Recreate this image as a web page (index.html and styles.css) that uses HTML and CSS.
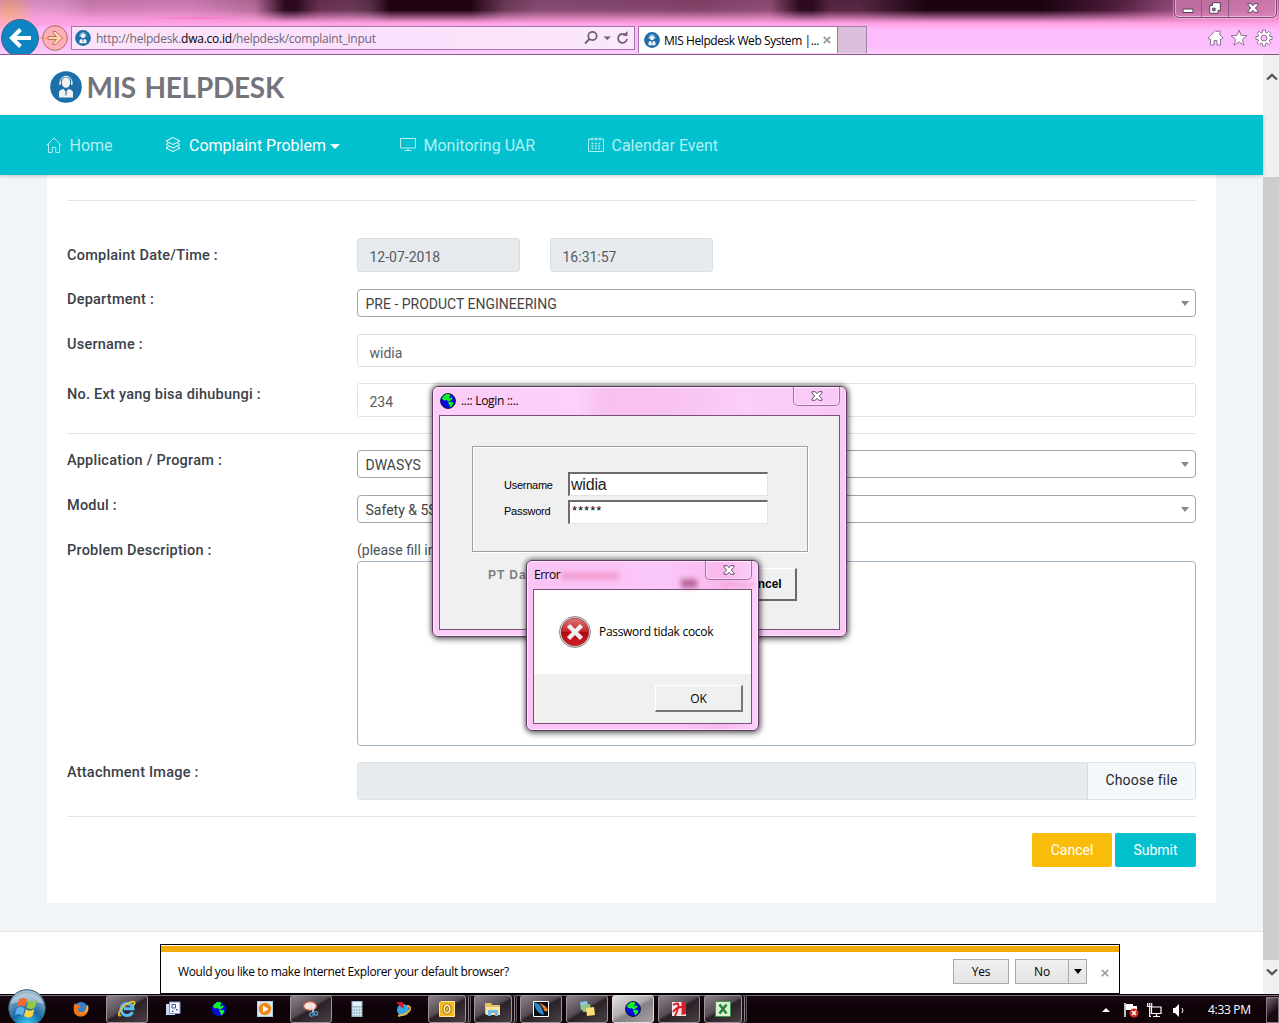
FILE: index.html
```html
<!DOCTYPE html>
<html lang="en">
<head>
<meta charset="utf-8">
<title>MIS Helpdesk Web System</title>
<link rel="stylesheet" href="styles.css">
</head>
<body>
<svg width="0" height="0" class="defs" aria-hidden="true">
  <symbol id="agent" viewBox="0 0 32 32">
    <circle cx="16" cy="16" r="15.8" fill="#1c6fa9"/>
    <path d="M10 12a6 6.800 0 0 1 12 0" fill="none" stroke="#fff" stroke-width="1"/>
    <ellipse cx="16" cy="11.500" rx="4.200" ry="5.200" fill="#f4f1f3"/>
    <path d="M9.500 10.500h1.500v3.500H9.500zM21 10.500h1.500v3.500H21z" fill="#dce8f2"/>
    <path d="M9 26.500v-5c0-2 2-3 4.500-3.500l2.500 3 2.500-3c2.500.5 4.500 1.500 4.500 3.500v5z" fill="#f4f1f3"/>
    <path d="m15.300 21 .7-.8.7.8-.3 3.500h-.8z" fill="#1c6fa9"/>
  </symbol>
  <symbol id="globe" viewBox="0 0 16 16">
    <circle cx="8" cy="8" r="7.400" fill="#0808e0" stroke="#03102c"/>
    <path d="M2.500 4 6 1h3.500l1 1.500L9 4.500l1 1L11.500 4l1.200 1.500L11 7.500 8.500 8.800 6.500 7 4.500 7.500 2 6zM9 9l3.500 0 1 1.500-2 3-1.500 1-.5-2.500-1.500-2z" fill="#12f02c"/>
  </symbol>
  <symbol id="closex" viewBox="0 0 12 10">
    <path d="M1 .7h3.200L6 2.700 7.800.7H11v1.400L8.300 5 11 7.900v1.400H7.800L6 7.300 4.200 9.300H1V7.900L3.700 5 1 2.100z" fill="#fff" stroke="#50405a" stroke-width=".9"/>
  </symbol>
</svg>

<header class="chrome">
  <div class="titlebar"></div>
  <div class="toolbar">
    <svg class="back" viewBox="0 0 38 38"><circle cx="19" cy="19" r="18.500" fill="#0e84c3" stroke="#41658c"/><path d="M30 19H12M19.500 10.500 11 19l8.500 8.500" fill="none" stroke="#fff" stroke-width="4"/></svg>
    <svg class="forward" viewBox="0 0 26 26"><circle cx="13" cy="13" r="12.300" fill="#ffa47080" stroke="#a7705e"/><path d="M6 11.500h8.500L11 8V6.500h3L20.500 13 14 19.500h-3V18l3.500-3.500H6z" fill="#ffd3a8" stroke="#b87468"/></svg>
    <div class="address">
      <svg class="favicon"><use href="#agent"/></svg>
      <span class="url">http://helpdesk.<b>dwa.co.id</b>/helpdesk/complaint_input</span>
      <svg class="addr-icons" viewBox="0 0 46 16"><g fill="none" stroke="#6f5d74" stroke-width="1.800"><circle cx="8.500" cy="6" r="4.200"/><path d="M5.500 9 1 13.500M42 5.500A4.500 4.500 0 1 0 43 9"/></g><path d="M19.500 6.500h7.500L23.200 10zM38.500 5.800h5V1z" fill="#6f5d74"/></svg>
    </div>
    <div class="tab">
      <svg class="favicon"><use href="#agent"/></svg>
      <span>MIS Helpdesk Web System |...</span>
      <svg class="tab-x" viewBox="0 0 8 8"><path d="m.8.8 6.400 6.400m0-6.400L.8 7.200" stroke="#999" stroke-width="1.800"/></svg>
    </div>
    <div class="newtab"></div>
    <svg class="tools" viewBox="0 0 66 18"><g fill="#fff" stroke="#8d7592"><path d="m1 9 7.500-7.500L10 3V2h3v4l3 3-1 1h-1.500v6H10v-4.500H7V16H3.500v-6H2z"/><path d="m32 1 2.100 5.400 5.900.3-4.600 3.700 1.600 5.700-5-3.200-5 3.200 1.600-5.700L24 6.700l5.900-.3z"/><path d="M55.500 1h3v2.300l1.600.7 1.700-1.700L64 4.500 62.200 6l.7 1.500H65v3h-2.100l-.7 1.500 1.700 1.700-2 2-1.800-1.600-1.600.6V17h-3v-2.300l-1.600-.6-1.700 1.600-2.200-2.200 1.700-1.500-.7-1.500H49v-3h2.100l.6-1.500L50 4.300 52.200 2.300 53.900 4l1.600-.7zM57 6a3 3 0 1 0 0 6 3 3 0 0 0 0-6z" fill-rule="evenodd"/></g></svg>
  </div>
  <div class="winbtns">
    <span><svg viewBox="0 0 12 12"><path d="M1 7h10v3.500H1z" fill="#fff" stroke="#50405a"/></svg></span>
    <span><svg viewBox="0 0 12 12"><path d="M3.500.7h7.800v7.800H9v2.800H.7V3.500h2.800z" fill="#fff" stroke="#50405a"/><path d="M3.600 6.200h2.500v2.500H3.600z" fill="#c979b0" stroke="#50405a"/></svg></span>
    <span><svg viewBox="0 0 12 10"><use href="#closex"/></svg></span>
  </div>
</header>

<div class="viewport">
  <main class="page">
    <div class="brand"><svg class="brand-icon"><use href="#agent"/></svg><span>MIS HELPDESK</span></div>
    <nav class="nav">
      <a><svg viewBox="0 0 16 16"><path d="m.5 8.500 7.500-7.500 7.500 7.500M2.500 7v8.500h3.700v-5h3.600v5h3.700V7"/></svg>Home</a>
      <a class="active"><svg viewBox="0 0 16 16"><path d="M8 .5 1 4l7 3.500L15 4zM3.500 6 1 7.500 8 11l7-3.500L12.500 6M3.500 9.500 1 11l7 3.500 7-3.500-2.500-1.500"/></svg>Complaint Problem<i class="caret"></i></a>
      <a><svg viewBox="0 0 16 16"><path d="M.5 1.500h15v9.500H.5zM8 11v2.500M4.500 13.500h7"/></svg>Monitoring UAR</a>
      <a><svg viewBox="0 0 16 16"><path d="M.5 2h15v12.500H.5zM4 .5v3M8 .5v3M12 .5v3"/><path d="M3.500 6.500h9M3.500 9h9M3.500 11.500h9" stroke-dasharray="1.800 1.600" stroke-width="1.500"/></svg>Calendar Event</a>
    </nav>
    <section class="card">
      <hr class="hr-top">
      <div class="row r-date"><label>Complaint Date/Time :</label><div class="pair"><div class="input ro">12-07-2018</div><div class="input ro">16:31:57</div></div></div>
      <div class="row"><label>Department :</label><div class="select">PRE - PRODUCT ENGINEERING</div></div>
      <div class="row"><label>Username :</label><div class="input user">widia</div></div>
      <div class="row r-ext"><label>No. Ext yang bisa dihubungi :</label><div class="input">234</div></div>
      <hr>
      <div class="row"><label>Application / Program :</label><div class="select">DWASYS</div></div>
      <div class="row"><label>Modul :</label><div class="select">Safety &amp; 5S</div></div>
      <div class="row"><label>Problem Description :</label><div><p class="hint">(please fill in</p><div class="textarea"></div></div></div>
      <div class="row r-file"><label>Attachment Image :</label><div class="file"><div class="file-name"></div><div class="file-btn">Choose file</div></div></div>
      <hr>
      <div class="actions"><button class="btn warn">Cancel</button><button class="btn info">Submit</button></div>
    </section>
    <footer class="footer"></footer>
  </main>
  <aside class="scrollbar">
    <svg viewBox="0 0 12 8"><path d="M1 6.500 6 1.800l5 4.700" fill="none" stroke="#555" stroke-width="2.300"/></svg>
    <div class="thumb"></div>
    <svg viewBox="0 0 12 8"><path d="m1 1.500 5 4.700 5-4.700" fill="none" stroke="#555" stroke-width="2.300"/></svg>
  </aside>
  <div class="notice">
    <span class="notice-text">Would you like to make Internet Explorer your default browser?</span>
    <span class="nbtn yes">Yes</span>
    <span class="nbtn no">No</span><span class="nbtn drop"><i></i></span>
    <svg class="notice-x" viewBox="0 0 8 8"><path d="m.7.7 6.600 6.600m0-6.600L.7 7.300" stroke="#999" stroke-width="1.600"/></svg>
  </div>
</div>

<div class="window login">
  <div class="wtitle"><svg class="wicon"><use href="#globe"/></svg><span>..:: Login ::..</span><span class="wclose"><svg><use href="#closex"/></svg></span></div>
  <div class="client">
    <div class="group">
      <div class="lrow"><span>Username</span><div class="field big">widia</div></div>
      <div class="lrow second"><span>Password</span><div class="field">*****</div></div>
    </div>
    <div class="lfoot"><span class="company">PT Das</span><span class="lcancel">Cancel</span></div>
  </div>
</div>

<div class="window error">
  <i class="smudge s1"></i><i class="smudge s2"></i><i class="smudge s3"></i>
  <div class="wtitle"><span>Error</span><span class="wclose"><svg><use href="#closex"/></svg></span></div>
  <div class="client">
    <div class="msg">
      <svg viewBox="0 0 32 32"><defs><linearGradient id="red" x2="0" y2="1"><stop stop-color="#db7a78"/><stop offset=".48" stop-color="#c3262b"/><stop offset=".5" stop-color="#ae0610"/><stop offset="1" stop-color="#cf2328"/></linearGradient></defs><circle cx="16" cy="16" r="15.500" fill="#e8e4e4" stroke="#8d8585"/><circle cx="16" cy="16" r="13.800" fill="url(#red)" stroke="#8f2222" stroke-width=".7"/><path d="m9.500 9.500 13 13m0-13-13 13" stroke="#eee" stroke-width="4.400"/></svg>
      <span>Password tidak cocok</span>
    </div>
    <div class="efoot"><span class="ok">OK</span></div>
  </div>
</div>

<footer class="taskbar">
  <svg class="start" viewBox="0 0 38 34"><defs><radialGradient id="orb" cx=".5" cy=".95" r=".9"><stop stop-color="#35d5fa"/><stop offset=".45" stop-color="#1668a4"/><stop offset="1" stop-color="#a2bccb"/></radialGradient></defs><circle cx="19" cy="19" r="18.300" fill="url(#orb)" stroke="#315873"/><path d="M2.500 15C6 1 32 1 35.500 15c-9-3-24-3-33 0z" fill="#fff" opacity=".35"/><path d="M11 10.500c3-2 5-2 8 0l-2 7.500c-3-2-5-2-8 0z" fill="#f26a2c"/><path d="M20.500 11c3 2 5 2 8.500 0l-2 7.500c-3 2-5 2-8.500 0z" fill="#94c83d"/><path d="M8.800 19.500c3-2 5-2 8 0l-2 7c-3-2-5-2-8 0z" fill="#60b4ee"/><path d="M18 20c3 2 5 2 8.500 0l-2 7c-3 2-5 2-8.500 0z" fill="#fbd23c"/></svg>
  <div class="apps">
    <span class="app"><svg viewBox="0 0 16 16"><circle cx="8" cy="8" r="7" fill="#3a7fc8"/><path d="M1 4C-1 14 5 16 9 15.500S17 10 15 4c-.5 1-1 1.500-1.500 1.500 0 4-3 6-6 5.500S4.500 8 6 7l2-.5L6.500 5 7 3 4 4.500 2 2z" fill="#ee7619"/><path d="M15 4c1 8-6 10-9 8 8 1 7-4 8-7z" fill="#fcc541"/></svg></span>
    <span class="app open"><svg class="wide" viewBox="0 0 18 18"><path d="M14.500 12a6 6 0 1 1 .5-3.300H6" fill="none" stroke="#55bdf3" stroke-width="3"/><path d="M3 15.500C-3 17 4 5 13 2c5-1.500 4 2 2 4" fill="none" stroke="#f3c62d" stroke-width="1.700"/></svg></span>
    <span class="app"><svg viewBox="0 0 16 16"><path d="M1 3h9v11H1z" fill="#cbdbf5"/><path d="M4.500 1H15v11.500H4.500z" fill="#f7f9ff" stroke="#7d98cb"/><path d="M7 3.500h3.500V7H7z" fill="none" stroke="#3e5998"/><path d="M11 8h1.500v1.500H11zM7 9.500h1.500V11H7z" fill="#3e5998"/></svg></span>
    <span class="app"><svg viewBox="0 0 16 16"><use href="#globe"/></svg></span>
    <span class="app"><svg viewBox="0 0 16 16"><path d="M0 0h16v16H0z" fill="#a9cfe5"/><path d="M1 1h14v14H1z" fill="#dceaf2"/><circle cx="8" cy="8" r="6.200" fill="#ef8617"/><path d="m6 4.500 5.500 3.500L6 11.500z" fill="#fff"/></svg></span>
    <span class="app open"><svg viewBox="0 0 16 16"><ellipse cx="7" cy="5" rx="6.500" ry="4.300" fill="#f5e8e3" stroke="#c9574e" stroke-width="1.300"/><path d="m7 3 4 8M12 5l-3 7" stroke="#ddd"/><g fill="none" stroke="#4e9fd3" stroke-width="1.300"><circle cx="8.500" cy="13.500" r="1.800"/><circle cx="13" cy="12.500" r="1.800"/></g></svg></span>
    <span class="app"><svg viewBox="0 0 16 16"><path d="M2.500 0h11v16h-11z" fill="#9bb8cb"/><path d="M3.500 1h9v4h-9z" fill="#e6f3f8"/><path d="M3.500 7.500h9M3.500 10.500h9M3.500 13.500h9" stroke="#e7f5ff" stroke-width="2" stroke-dasharray="1.700 .7"/></svg></span>
    <span class="app"><svg viewBox="0 0 16 16"><circle cx="8" cy="9" r="6" fill="#35a8e4"/><path d="M1 1h7l1 7-3-2z" fill="#cf1932"/><path d="M3 15C18 12 17 5 12 5" fill="none" stroke="#f5b23b" stroke-width="1.800"/></svg></span>
    <span class="app open stack"><svg viewBox="0 0 16 16"><path d="M.5 2 2 .5h13.500v15H.5z" fill="#f5b81d" stroke="#ffe49a"/><ellipse cx="8" cy="8" rx="2.800" ry="3.800" fill="none" stroke="#9c6607" stroke-width="3.400"/><ellipse cx="8" cy="8" rx="2.800" ry="3.800" fill="none" stroke="#fff3c4" stroke-width="1.700"/></svg></span>
    <span class="app open stack"><svg viewBox="0 0 16 16"><path d="M0 2h6l1 2h8v9H0z" fill="#e8c260"/><path d="M1 6h14v8H1z" fill="#fae6a0"/><path d="M3 15V9h10v6h-3v-3H6v3z" fill="#6cbbe6"/></svg></span>
    <span class="app open"><svg viewBox="0 0 16 16"><path d="M.5.5h15v15H.5z" fill="#091018" stroke="#fff"/><path d="M1 1.500c5 0 8 4 10 12.500-5-1-9-5-10-12.500z" fill="#3587c4"/><path d="M6 2c4 1 7 3 9 7-2 2-3 2-4 0-1-3-3-5-5-7z" fill="#ed7c31"/></svg></span>
    <span class="app open"><svg viewBox="0 0 16 16"><path d="m1 1 7-1 2 7-8 2z" fill="#8ac7e8"/><path d="m3 4 8-1 1 8H4z" fill="#91c778"/><path d="m7 7 8-1 1 8-8 1z" fill="#ffdf71"/></svg></span>
    <span class="app open current"><svg viewBox="0 0 16 16"><use href="#globe"/></svg></span>
    <span class="app open"><svg viewBox="0 0 16 16"><path d="M1 1h14v14H1z" fill="#f4e6e6"/><path d="M10.500 1H15v12l-4.500 1z" fill="#df1c23"/><path d="M2 4c7-4 7 0 2 11M2 11c3-4 6-5 9-5" fill="none" stroke="#d61920" stroke-width="1.800"/></svg></span>
    <span class="app open stack"><svg viewBox="0 0 16 16"><path d="M.5.5h15v15H.5z" fill="#d8efd2" stroke="#3f944b"/><path d="m4.500 3.500 7 9m0-9-7 9" stroke="#22813a" stroke-width="2.500"/></svg></span>
  </div>
  <div class="tray">
    <svg class="up" viewBox="0 0 8 4"><path d="m0 4 4-4 4 4z" fill="#fff"/></svg>
    <svg class="flag" viewBox="0 0 15 15"><path d="M1 0v14" stroke="#fff" stroke-width="1.500"/><path d="M2 1h7v2h4v6H7V7H2z" fill="#fff"/><circle cx="10" cy="10" r="4.600" fill="#d02b22"/><path d="m8 8 4 4m0-4-4 4" stroke="#fff" stroke-width="1.500"/></svg>
    <svg class="net" viewBox="0 0 15 15"><path d="M4.500 4h9.500v6.500H4.500zM9.500 10.500v3M6 13.500h7M.7 0v3.500h4V0M2.700 0v13.500H4" fill="none" stroke="#fff" stroke-width="1.200"/></svg>
    <svg class="vol" viewBox="0 0 12 15"><path d="M0 5h2l4-4v13l-4-4H0z" fill="#fff"/><path d="M9 5q2 2.500 0 5" fill="none" stroke="#fff"/></svg>
    <span class="clock">4:33 PM</span>
    <span class="desk"></span>
  </div>
</footer>
</body>
</html>
```

FILE: styles.css
```css
* { box-sizing: border-box; }
body {
  margin: 0;
  width: 1279px;
  height: 1023px;
  overflow: hidden;
  display: flex;
  flex-direction: column;
  position: relative;
  font-family: Roboto, sans-serif;
  background: #fff;
}
svg { display: block; flex: none; }
.defs { position: absolute; }

/* Browser frame */
.chrome {
  height: 55px;
  flex: none;
  position: relative;
  overflow: hidden;
  display: flex;
  flex-direction: column;
  border-bottom: 1px solid #8a5688;
  background:
    radial-gradient(circle at 10px 10px, #ffb08a 0, #ffb08a00 26px),
    radial-gradient(ellipse at 40px 38px, #ff9a50 0, #ff9a5000 38px),
    radial-gradient(ellipse at 195px 18px, #ff6fcc 0, #ff6fcc00 50px),
    linear-gradient(#ffa0d800 10px, #ff9fe0 23px, #fdbcfc 30px, #fdbcfc 46px, #fbd0fb 54px),
    linear-gradient(90deg, #fba6ea 0, #f3a0dc 60px, #e08cc4 90px, #e890cc 190px, #c678a8 255px, #2b0a1e 285px, #2b0a1e 296px, #6f3558 318px, #744060 350px, #60354f 370px, #20020f 390px, #20020f 470px, #74405f 505px, #94547d 540px, #8d4b73 700px, #9c5680 770px, #2c0a1e 800px, #2c0a1e 812px, #5c2a48 830px, #5c2a48 860px, #1a020f 925px, #1a020f 1040px, #2b0a1e 1065px, #4e1d3c 1110px, #9a4f80 1170px, #cf79ae 1279px);
}
.titlebar { height: 19px; flex: none; background: linear-gradient(#2b061c30, #2b061c00); }
.toolbar { display: flex; flex: none; height: 35px; }
.back { width: 38px; height: 38px; margin-left: 1px; }
.forward { width: 26px; height: 26px; margin: 6px 0 0 3px; }
.address {
  width: 564px;
  height: 24px;
  margin: 7px 0 0 3px;
  border: 1px solid #a474ab;
  background: linear-gradient(90deg, #fbe4fb, #fae0fc 50%, #fbe8fb);
  display: flex;
  align-items: center;
  padding-left: 3px;
}
.favicon { width: 16px; height: 16px; }
.url { flex: 1; margin-left: 5px; padding-top: 2px; font: 12px/16px "Open Sans", sans-serif; color: #716672; letter-spacing: -.24px; }
.url b { font-weight: 400; color: #000; }
.addr-icons { width: 46px; height: 16px; margin-right: 4px; }
.tab {
  width: 200px;
  height: 27px;
  margin: 7px 0 0 3px;
  background: #fff;
  border: 1px solid #a474ab;
  border-bottom: 0;
  display: flex;
  align-items: center;
  padding-left: 5px;
  font: 12px/16px "Open Sans", sans-serif;
  color: #000;
}
.tab span { width: 155px; margin-left: 4px; letter-spacing: -.43px; white-space: nowrap; padding-top: 2px; }
.tab-x { width: 8px; height: 8px; margin-left: 4px; }
.newtab { width: 29px; height: 27px; margin-top: 7px; background: #dabfdb; border: 1px solid #a583a8; border-left: 0; border-bottom: 0; }
.tools { width: 66px; height: 18px; margin: 10px 0 0 340px; }
.winbtns {
  position: absolute;
  top: -2px;
  left: 1174px;
  width: 103px;
  height: 20px;
  display: flex;
  border: 1px solid #7b4a6c;
  border-radius: 0 0 5px 5px;
  box-shadow: 0 0 0 1px #ffffff50, inset 0 0 0 1px #ffffff70;
  background: #d983b8a0;
}
.winbtns span { display: flex; justify-content: center; align-items: center; width: 27px; border-right: 1px solid #8b5a7c; }
.winbtns span:last-child { flex: 1; border: 0; }
.winbtns svg { width: 12px; height: 12px; }

/* Web page */
.viewport { height: 939px; flex: none; position: relative; display: flex; }
.page { width: 1263px; display: flex; flex-direction: column; background: #f1f5f8; }
.brand { height: 60px; flex: none; background: #fff; display: flex; align-items: center; padding: 4px 0 0 49.500px; }
.brand-icon { width: 32px; height: 32px; }
.brand span { margin-left: 5px; font: 700 28px/32px Lato, sans-serif; letter-spacing: -.25px; word-spacing: 2px; color: #74757c; white-space: nowrap; }
.nav {
  height: 60px;
  flex: none;
  background: #02c0ce;
  display: grid;
  grid-template-columns: 119px 235px 188px auto;
  padding-left: 46px;
  position: relative;
  box-shadow: 0 1px 4px #0003;
}
.nav a { display: flex; align-items: center; font-size: 16px; color: #b3f0f4; white-space: nowrap; }
.nav a.active { color: #fff; }
.nav svg { width: 16px; height: 16px; margin-right: 7.500px; fill: none; stroke: currentColor; stroke-width: 1; }
.nav .active svg { margin-right: 8px; }
.caret { margin: 2px 0 0 4px; border: 5px solid transparent; border-top-color: #fff; border-bottom: 0; }
.card { height: 728px; flex: none; margin: 0 47px; padding: 25px 20px 0; background: #fff; }
.card hr { margin: 16px 0; border: 0; height: 1px; background: #dfe3e6; }
.card .hr-top { margin: 0 0 37px; }
.row { display: grid; grid-template-columns: 290px 839px; align-items: start; margin-bottom: 17px; }
.row label { font: 500 14.500px/20px Roboto, sans-serif; color: #3a4148; white-space: nowrap; letter-spacing: .23px; padding-top: 1px; }
.row.r-date label { padding-top: 8px; }
.r-ext { margin-bottom: 16px; }
.row.r-ext label { padding-top: 2px; }
.pair { display: flex; gap: 30px; }
.input { height: 34px; border: 1px solid #dde2e6; border-radius: 3px; padding: 3px 11.500px 0; font-size: 14px; line-height: 31px; color: #565c62; background: #fff; }
.input.user { height: 33px; margin-bottom: 0; }
.row:has(.user) { margin-bottom: 16px; }
.ro { width: 163px; background: #e7ebee; border-color: #d8dee3; }
.select { height: 28px; border: 1px solid #a5a5a5; border-radius: 4px; padding: 1px 6px 0 7.500px; display: flex; align-items: center; justify-content: space-between; font-size: 14px; color: #444; }
.select::after { content: ""; border: 4px solid transparent; border-top: 5px solid #888; border-bottom: 0; }
.hint { margin: 0; font-size: 14px; line-height: 21px; color: #495057; }
.textarea { height: 185px; border: 1px solid #a6b5c2; border-radius: 4px; background: #fff; }
.row:has(.textarea) { margin-bottom: 16px; }
.r-file { margin-bottom: 16px; }
.file { display: flex; height: 38px; border: 1px solid #dbe2e8; border-radius: 3px; overflow: hidden; }
.file-name { flex: 1; background: #e7ebee; border-right: 1px solid #d6dde2; }
.file-btn { width: 107px; text-align: center; font-size: 14px; line-height: 35px; letter-spacing: .2px; background: #f5f8fb; color: #24292e; }
.actions { display: flex; justify-content: flex-end; gap: 3px; }
.btn { width: 80px; height: 34px; border: 0; border-radius: 2px; padding: 0; font: 14px/34px Roboto, sans-serif; color: #fff; }
.warn { background: #f9bc0b; }
.info { width: 81px; background: #02c0ce; }
.footer { flex: 1; margin-top: 28px; background: #fff; border-top: 1px solid #dfe3e6; }
.scrollbar { width: 16px; background: #f0f0f0; display: flex; flex-direction: column; align-items: center; padding: 18px 0; }
.scrollbar svg { width: 12px; height: 8px; margin-left: 1px; }
.thumb { width: 16px; height: 783px; margin: 96px 0 8px; background: #cdcdcd; flex: none; }

/* Default browser prompt */
.notice {
  position: absolute;
  left: 160px;
  top: 889px;
  width: 960px;
  height: 50px;
  border: 1px solid #000;
  background: linear-gradient(#fff 1px, #f2ab00 1px, #f2ab00 7px, #fff 7px);
  display: flex;
  align-items: center;
  padding: 5px 10px 0 17px;
  font: 12px/16px "Open Sans", sans-serif;
  color: #000;
}
.notice-text { flex: 1; letter-spacing: -.38px; white-space: nowrap; }
.nbtn { height: 25px; border: 1px solid #a8a8a8; background: linear-gradient(#f0f0f0, #e4e4e4); display: flex; align-items: center; justify-content: center; letter-spacing: -.2px; }
.yes { width: 56px; margin-right: 6px; }
.no { width: 54px; }
.drop { width: 19px; margin-left: -1px; }
.drop i { border: 4px solid transparent; border-top: 5px solid #000; border-bottom: 0; }
.notice-x { width: 8px; height: 8px; margin: 2px 0 0 14px; }

/* Desktop windows */
.window {
  position: absolute;
  border: 1px solid #5d3b5e;
  border-radius: 6px;
  box-shadow: 0 0 5px 1px #0007, 1px 2px 7px #0006, inset 0 0 0 1px #ffe8ff;
  display: flex;
  flex-direction: column;
  padding: 0 6px 6px;
  font: 12px/16px "Open Sans", sans-serif;
  color: #000;
}
.login { left: 432px; top: 386px; width: 415px; height: 251px; background: linear-gradient(90deg, #fccdf8 0, #fbd0fa 35%, #f8c0ee 42%, #f9c3f0 58%, #fbcdf8 75%, #fac8f7); }
.error { left: 526px; top: 560px; width: 233px; height: 171px; background: linear-gradient(90deg, #fac4f4, #fbc6f8 60%, #f9b9ed 85%, #fbd1fb); }
.wtitle { height: 28px; flex: none; display: flex; align-items: center; position: relative; padding-left: 1px; letter-spacing: -.3px; }
.error .wtitle { letter-spacing: -.5px; }
.wicon { width: 16px; height: 16px; margin-right: 5px; }
.wclose { position: absolute; right: 0; top: 0; width: 47px; height: 19px; border: 1px solid #a5709f; border-top: 0; border-radius: 0 0 5px 5px; box-shadow: inset 0 0 0 1px #ffffff60; display: flex; justify-content: center; align-items: center; }
.wclose svg { width: 12px; height: 10px; }
.client { flex: 1; border: 1px solid #77507a; background: #f0f0f0; display: flex; flex-direction: column; }
.group { width: 336px; height: 106px; margin: 30px 0 0 32px; padding: 25px 0 0 31px; border: 1px solid #a0a0a0; box-shadow: 1px 1px 0 #fff, inset 1px 1px 0 #fff; display: flex; flex-direction: column; gap: 4px; }
.lrow { display: flex; align-items: center; font: 11px/24px "Liberation Sans", sans-serif; letter-spacing: -.25px; }
.lrow span { width: 64px; padding-top: 2px; line-height: 22px; }
.second span { padding: 0 0 2px; }
.field { width: 200px; height: 24px; border: 2px solid #6c6c6c; border-right: 1px solid #e3e3e3; border-bottom: 1px solid #e3e3e3; background: #fff; font-size: 13px; line-height: 18px; padding-left: 2px; letter-spacing: 1px; }
.field.big { font-size: 16px; line-height: 21px; padding-left: 1px; letter-spacing: -.2px; color: #222; }
.lfoot { display: flex; justify-content: space-between; padding: 16px 42px 0 48px; }
.company { font: 700 12px/14px "Liberation Sans", sans-serif; color: #808080; letter-spacing: .9px; }
.lcancel { width: 77px; height: 33px; border: 1px solid #fff; border-right: 2px solid #696969; border-bottom: 2px solid #696969; text-align: center; font: 700 12px/30px "Liberation Sans", sans-serif; padding-left: 8px; }
.error .client { background: #fff; }
.msg { flex: 1; display: flex; align-items: center; padding-left: 25px; letter-spacing: -.3px; }
.msg svg { width: 32px; height: 32px; margin-right: 8px; }
.efoot { height: 49px; background: #f0f0f0; padding: 11px 8px; display: flex; justify-content: flex-end; }
.ok { width: 88px; height: 27px; border: 1px solid #fff; border-right: 2px solid #777; border-bottom: 2px solid #777; text-align: center; line-height: 25px; }
.smudge { position: absolute; filter: blur(2.500px); }
.s1 { left: 34px; top: 11px; width: 58px; height: 8px; background: #e97cae80; }
.s2 { left: 154px; top: 18px; width: 16px; height: 9px; background: #a0406fb0; }
.s3 { left: 194px; top: 21px; width: 34px; height: 5px; background: #e46fa550; }

/* Taskbar */
.taskbar { height: 29px; flex: none; position: relative; display: flex; background: linear-gradient(#000 1px, #806b78 1px, #806b78 2px, #1b0813 2px, #0d0207 14px, #120309); }
.start { position: absolute; left: 8px; top: -5px; width: 38px; height: 34px; }
.apps { flex: 1; display: flex; gap: 4px; padding: 1px 0 0 60px; }
.app { position: relative; width: 42px; height: 28px; display: flex; align-items: center; justify-content: center; flex: none; }
.app svg { width: 16px; height: 16px; margin-top: -1px; }
.app .wide { width: 18px; height: 18px; }
.open { border: 1px solid #9c949a; border-radius: 3px; background: linear-gradient(150deg, #8c848a, #554c53 45%, #2b2228 52%, #494047); }
.current { border-color: #ddd; background: linear-gradient(150deg, #e4e2e4, #b0acaf 45%, #858083 55%, #a8a2a6); }
.stack { width: 38px; margin-right: 4px; box-shadow: 2px 0 0 #1b1017, 3px 0 0 #8c848a, 4px 0 0 #1b1017, 5px 0 0 #625860; }
.tray { width: 179px; display: flex; align-items: center; padding-top: 3px; padding-left: 2px; }
.up { width: 8px; height: 4px; }
.flag { width: 15px; height: 15px; margin-left: 14px; }
.net { width: 15px; height: 15px; margin-left: 8px; }
.vol { width: 12px; height: 15px; margin-left: 11px; }
.clock { margin-left: 23px; width: 58px; font: 12px/16px "Open Sans", sans-serif; letter-spacing: -.3px; color: #fff; white-space: nowrap; }
.desk { flex: 1; height: 26px; border: 1px solid #85767f; background: linear-gradient(135deg, #776a72, #1a0a13 60%); }
```
